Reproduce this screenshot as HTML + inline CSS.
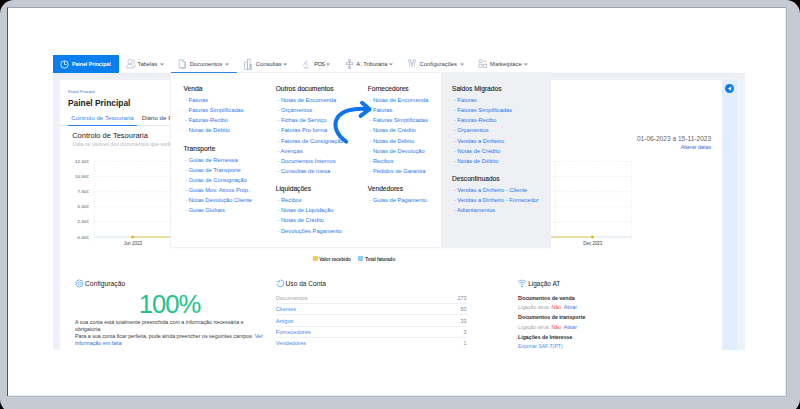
<!DOCTYPE html>
<html><head><meta charset="utf-8">
<style>
*{box-sizing:border-box;margin:0;padding:0}
html,body{width:800px;height:409px;overflow:hidden;background:#000;font-family:"Liberation Sans",sans-serif}
.a{position:absolute;white-space:nowrap}
#frame{position:absolute;left:0;top:0;width:800px;height:413px;background:#c6cbd3;border-radius:14px}
#screen{position:absolute;left:7px;top:7px;width:779px;height:389px;background:#fff;overflow:hidden;
 border-left:1px solid #41557a;border-top:1px solid #98a2b0;box-shadow:1px 1px 0 #b3b9c3, inset 0 -1px 0 #e6e9ed, inset -1px 0 0 #e6e9ed}
#s{position:absolute;left:-8px;top:-8px;width:800px;height:409px}
.nav{font-size:5.8px;color:#3a3f4a;line-height:10px;top:58.8px}
.h{font-size:6.65px;color:#1e1e28;line-height:10px;-webkit-text-stroke:0.12px #1e1e28}
.l{font-size:5.75px;color:#2a76ee;line-height:10px}
.l:before{content:"- ";color:#8a93a3}
</style></head><body>
<div id="frame"></div>
<div id="screen"><div id="s">

<!-- page background -->
<div class="a" style="left:53px;top:73px;width:692px;height:277px;background:#f0f1f6"></div>
<div class="a" style="left:53px;top:73px;width:692px;height:2.5px;background:#ebedf3"></div>
<div class="a" style="left:60px;top:80px;width:662px;height:270px;background:#fff"></div>
<div class="a" style="left:722px;top:80px;width:15px;height:270px;background:#e1effd"></div>
<div class="a" style="left:725px;top:83.5px;width:9px;height:9px;border-radius:50%;background:#0f7bf0"></div>
<svg class="a" style="left:725px;top:83.5px" width="9" height="9" viewBox="0 0 9 9"><path d="M3.1,4.5 L6,2.7 L6,6.3 Z" fill="#fff" stroke="#fff" stroke-width="0.3" stroke-linejoin="round"/></svg>

<!-- nav -->
<div class="a" style="left:53px;top:55px;width:65.5px;height:18px;background:#0c7fef"></div>
<svg class="a" style="left:60px;top:59.5px" width="9" height="9" viewBox="0 0 9 9"><circle cx="4.5" cy="4.5" r="3.7" fill="none" stroke="#fff" stroke-width="0.8"/><path d="M4.5,1.5 V4.5 H6.5" fill="none" stroke="#fff" stroke-width="0.8"/></svg>
<div class="a" style="left:72px;top:59px;font-size:5.2px;font-weight:bold;color:#fff;line-height:10px">Painel Principal</div>

<svg class="a" style="left:124.50px;top:58.20px" width="12" height="11" viewBox="0 0 12 11" fill="none" stroke="#a3aec3" stroke-width="0.65"><circle cx="5" cy="3.6" r="2.2"/><path d="M1.3,10 C1.3,7.3 3,6.3 5,6.3 C7,6.3 8.7,7.3 8.7,10 Z"/><path d="M7.2,1.6 C8.8,1.6 9.6,2.6 9.6,3.7 C9.6,4.8 8.9,5.6 7.8,5.8 M9.3,6.6 C10.3,7.1 10.8,8.1 10.8,9.6"/></svg>
<div class="a nav" style="left:137.50px">Tabelas</div>
<svg class="a" style="left:177.7px;top:58.6px" width="9" height="10" viewBox="0 0 9 10" fill="none" stroke="#a3aec3" stroke-width="0.65"><path d="M1.2,0.8 H4.6 L6.6,2.8 V8.6 H1.2 Z M4.6,0.8 V2.8 H6.6"/><path d="M7.6,2.6 V9.4 H2.4"/></svg>
<div class="a nav" style="left:189.70px">Documentos</div>
<svg class="a" style="left:244px;top:58.5px" width="8" height="11" viewBox="0 0 8 11" fill="none" stroke="#a3aec3" stroke-width="0.65"><rect x="0.7" y="3" width="2.6" height="7.3"/><rect x="3.3" y="0.5" width="2.8" height="9.8"/><rect x="6.1" y="5.6" width="1.4" height="4.7"/></svg>
<div class="a nav" style="left:255.80px">Consultas</div>
<svg class="a" style="left:302px;top:59px" width="8" height="10" viewBox="0 0 8 10" fill="none" stroke="#a3aec3" stroke-width="0.65"><path d="M5.6,0.8 L1,6.6 M3.6,3.6 L5.6,7.2 M2,8.8 H6.8"/></svg>
<div class="a nav" style="left:314.30px;letter-spacing:-0.7px">POS</div>
<svg class="a" style="left:344.5px;top:58.5px" width="9" height="11" viewBox="0 0 9 11" fill="none" stroke="#a3aec3" stroke-width="0.65"><rect x="3.6" y="0.7" width="1.8" height="1.3"/><path d="M4.5,2 V9.5"/><rect x="1.2" y="3.3" width="6.6" height="2.4"/><path d="M3.2,7.6 H5.8 V9.4 H3.2 Z"/></svg>
<div class="a nav" style="left:356.30px">A. Tributária</div>
<svg class="a" style="left:408.2px;top:59.2px" width="8" height="10" viewBox="0 0 8 10" fill="none" stroke="#aab5c9" stroke-width="0.6"><path d="M1.6,3.4 V8.6 M4,0.8 V4.2 M4,6.2 V8.6 M6.4,3.4 V8.6"/><rect x="0.8" y="0.9" width="1.6" height="2.4"/><rect x="3.2" y="4.3" width="1.6" height="1.8"/><rect x="5.6" y="0.9" width="1.6" height="2.4"/></svg>
<div class="a nav" style="left:419.60px">Configurações</div>
<svg class="a" style="left:477.5px;top:59px" width="10" height="10" viewBox="0 0 10 10" fill="none" stroke="#a3aec3" stroke-width="0.65"><rect x="1" y="1" width="3" height="2.6"/><path d="M5.6,2.3 H8.8"/><rect x="1" y="5.2" width="3" height="3.2"/><rect x="5.6" y="5.2" width="3.2" height="3.2"/></svg>
<div class="a nav" style="left:490.10px">Marketplace</div>
<svg class="a" style="left:160.00px;top:62.80px" width="4" height="3" viewBox="0 0 4 3"><path d="M0.5,0.7 L2,2.2 L3.5,0.7 Z" fill="#8a909a" stroke="#8a909a" stroke-width="0.5" stroke-linejoin="round"/></svg>
<svg class="a" style="left:225.20px;top:62.80px" width="4" height="3" viewBox="0 0 4 3"><path d="M0.5,0.7 L2,2.2 L3.5,0.7 Z" fill="#8a909a" stroke="#8a909a" stroke-width="0.5" stroke-linejoin="round"/></svg>
<svg class="a" style="left:283.40px;top:62.80px" width="4" height="3" viewBox="0 0 4 3"><path d="M0.5,0.7 L2,2.2 L3.5,0.7 Z" fill="#8a909a" stroke="#8a909a" stroke-width="0.5" stroke-linejoin="round"/></svg>
<svg class="a" style="left:326.00px;top:62.80px" width="4" height="3" viewBox="0 0 4 3"><path d="M0.5,0.7 L2,2.2 L3.5,0.7 Z" fill="#8a909a" stroke="#8a909a" stroke-width="0.5" stroke-linejoin="round"/></svg>
<svg class="a" style="left:389.20px;top:62.80px" width="4" height="3" viewBox="0 0 4 3"><path d="M0.5,0.7 L2,2.2 L3.5,0.7 Z" fill="#8a909a" stroke="#8a909a" stroke-width="0.5" stroke-linejoin="round"/></svg>
<svg class="a" style="left:459.50px;top:62.80px" width="4" height="3" viewBox="0 0 4 3"><path d="M0.5,0.7 L2,2.2 L3.5,0.7 Z" fill="#8a909a" stroke="#8a909a" stroke-width="0.5" stroke-linejoin="round"/></svg>
<svg class="a" style="left:524.00px;top:62.80px" width="4" height="3" viewBox="0 0 4 3"><path d="M0.5,0.7 L2,2.2 L3.5,0.7 Z" fill="#8a909a" stroke="#8a909a" stroke-width="0.5" stroke-linejoin="round"/></svg>
<div class="a" style="left:171px;top:71.8px;width:65.5px;height:1.3px;background:#2f86ee;z-index:5"></div>

<!-- card content -->
<div class="a" style="left:68px;top:88.6px;font-size:3.9px;color:#2f6fd6;line-height:6px">Painel Principal</div>
<div class="a" style="left:68.00px;top:97.00px;font-size:8.4px;font-weight:bold;color:#222;line-height:12px">Painel Principal</div>
<div class="a" style="left:71.30px;top:113.20px;font-size:6.2px;color:#3a84f2;line-height:10px">Controlo de Tesouraria</div>
<div class="a" style="left:141.70px;top:113.20px;font-size:6.2px;color:#444;line-height:10px">Diário de Fornecedores</div>
<div class="a" style="left:60px;top:125.0px;width:490px;height:0.7px;background:#e4e7ec"></div>
<div class="a" style="left:67.5px;top:124.6px;width:69.2px;height:1.4px;background:#2f86ee"></div>
<div class="a" style="left:72.20px;top:130.20px;font-size:7.5px;color:#222;line-height:11px">Controlo de Tesouraria</div>
<div class="a" style="left:72.4px;top:140.8px;font-size:5.25px;color:#b3b8c0;line-height:7px">Lista os valores dos documentos que estão pendentes de pagamento</div>

<div class="a" style="left:59.0px;top:157.80px;width:30px;text-align:right;font-size:4.2px;letter-spacing:0.2px;line-height:8px;color:#3d3d3d">12,50€</div>
<div class="a" style="left:59.0px;top:172.90px;width:30px;text-align:right;font-size:4.2px;letter-spacing:0.2px;line-height:8px;color:#3d3d3d">10,00€</div>
<div class="a" style="left:59.0px;top:188.10px;width:30px;text-align:right;font-size:4.2px;letter-spacing:0.2px;line-height:8px;color:#3d3d3d">7,50€</div>
<div class="a" style="left:59.0px;top:203.20px;width:30px;text-align:right;font-size:4.2px;letter-spacing:0.2px;line-height:8px;color:#3d3d3d">5,00€</div>
<div class="a" style="left:59.0px;top:218.40px;width:30px;text-align:right;font-size:4.2px;letter-spacing:0.2px;line-height:8px;color:#3d3d3d">2,50€</div>
<div class="a" style="left:59.0px;top:233.50px;width:30px;text-align:right;font-size:4.2px;letter-spacing:0.2px;line-height:8px;color:#3d3d3d">0,00€</div>
<svg class="a" style="left:0;top:0" width="800" height="409" viewBox="0 0 800 409"><line x1="94.3" y1="161.40" x2="631.6" y2="161.40" stroke="#e6e6e6" stroke-width="0.7" stroke-dasharray="1.5 1.5"/><line x1="94.3" y1="176.54" x2="631.6" y2="176.54" stroke="#e6e6e6" stroke-width="0.7" stroke-dasharray="1.5 1.5"/><line x1="94.3" y1="191.68" x2="631.6" y2="191.68" stroke="#e6e6e6" stroke-width="0.7" stroke-dasharray="1.5 1.5"/><line x1="94.3" y1="206.82" x2="631.6" y2="206.82" stroke="#e6e6e6" stroke-width="0.7" stroke-dasharray="1.5 1.5"/><line x1="94.3" y1="221.96" x2="631.6" y2="221.96" stroke="#e6e6e6" stroke-width="0.7" stroke-dasharray="1.5 1.5"/><line x1="94.30" y1="161.4" x2="94.30" y2="240.6" stroke="#e6e6e6" stroke-width="0.7" stroke-dasharray="1.5 1.5"/><line x1="171.06" y1="161.4" x2="171.06" y2="240.6" stroke="#e6e6e6" stroke-width="0.7" stroke-dasharray="1.5 1.5"/><line x1="247.81" y1="161.4" x2="247.81" y2="240.6" stroke="#e6e6e6" stroke-width="0.7" stroke-dasharray="1.5 1.5"/><line x1="324.57" y1="161.4" x2="324.57" y2="240.6" stroke="#e6e6e6" stroke-width="0.7" stroke-dasharray="1.5 1.5"/><line x1="401.33" y1="161.4" x2="401.33" y2="240.6" stroke="#e6e6e6" stroke-width="0.7" stroke-dasharray="1.5 1.5"/><line x1="478.09" y1="161.4" x2="478.09" y2="240.6" stroke="#e6e6e6" stroke-width="0.7" stroke-dasharray="1.5 1.5"/><line x1="554.84" y1="161.4" x2="554.84" y2="240.6" stroke="#e6e6e6" stroke-width="0.7" stroke-dasharray="1.5 1.5"/><line x1="631.60" y1="161.4" x2="631.60" y2="240.6" stroke="#e6e6e6" stroke-width="0.7" stroke-dasharray="1.5 1.5"/><rect x="94.3" y="236.2" width="537.3" height="1.8" fill="#e9eff7"/><rect x="132.5" y="236.45" width="460" height="1.3" fill="#efd27c"/><circle cx="132.5" cy="237.1" r="1.4" fill="#e2a70c"/><circle cx="592.4" cy="237.1" r="1.4" fill="#e2a70c"/></svg>
<div class="a" style="left:112.80px;top:239.90px;width:40px;text-align:center;font-size:4.45px;line-height:8px;color:#444">Jun 2023</div>
<div class="a" style="left:572.80px;top:239.90px;width:40px;text-align:center;font-size:4.45px;line-height:8px;color:#444">Dec 2023</div>
<div class="a" style="left:611.2px;top:134px;width:100px;text-align:right;font-size:6.6px;line-height:10px;color:#666">01-06-2023 a 15-11-2023</div>
<div class="a" style="left:611.2px;top:142.8px;width:100px;text-align:right;font-size:5.4px;line-height:8px;color:#2f6fd6">Alterar datas</div>
<div class="a" style="left:313.2px;top:256.2px;width:4.8px;height:4.5px;background:#f5cb5c"></div>
<div class="a" style="left:319.2px;top:255.6px;font-size:4.6px;line-height:8px;color:#333;font-weight:bold">Valor recebido</div>
<div class="a" style="left:358.2px;top:256.2px;width:4.8px;height:4.5px;background:#8ecdf7"></div>
<div class="a" style="left:365.2px;top:255.6px;font-size:4.55px;line-height:8px;color:#333;font-weight:bold">Total faturado</div>
<!--bottom-->
<svg class="a" style="left:75.20px;top:279.40px" width="9" height="9" viewBox="0 0 9 9" fill="none" stroke="#4d9af5" stroke-width="0.7"><circle cx="4.5" cy="4.5" r="1.5"/><path d="M4.5,0.6 L5.4,1.6 L6.8,1.3 L7,2.7 L8.2,3.5 L7.6,4.5 L8.2,5.5 L7,6.3 L6.8,7.7 L5.4,7.4 L4.5,8.4 L3.6,7.4 L2.2,7.7 L2,6.3 L0.8,5.5 L1.4,4.5 L0.8,3.5 L2,2.7 L2.2,1.3 L3.6,1.6 Z"/></svg>
<div class="a" style="left:85.00px;top:278.90px;font-size:6.75px;line-height:10px;color:#222">Configuração</div>
<div class="a" style="left:138.7px;top:289.2px;font-size:25.6px;letter-spacing:-1px;line-height:30px;color:#1ec28b">100%</div>
<div class="a" style="left:75.00px;top:319.35px;font-size:5.32px;line-height:6.95px;color:#3a3a3a;white-space:normal;width:190px">A sua conta está totalmente preenchida com a informação necessária e obrigatória.<br>Para a sua conta ficar perfeita, pode ainda preencher os seguintes campos: <span style="color:#2f6fd6">Ver informação em falta</span></div>
<svg class="a" style="left:276px;top:278.6px" width="9" height="9" viewBox="0 0 9 9" fill="none" stroke="#5aa2f6" stroke-width="0.8" stroke-linejoin="round"><path d="M4.5,0.95 A3.5,3.5 0 1 1 0.9,4.9"/><path d="M0.5,2.9 L3.7,2.9 L3.7,0.9"/></svg>
<div class="a" style="left:285.60px;top:278.80px;font-size:6.6px;line-height:10px;color:#222">Uso da Conta</div>
<div class="a" style="left:275.8px;top:294px;font-size:5.65px;line-height:8px;color:#a3a3a3">Documentos</div>
<div class="a" style="left:416.6px;top:294px;width:50px;text-align:right;font-size:5.4px;line-height:8px;color:#8a8a8a">273</div>
<div class="a" style="left:277.00px;top:303.10px;width:190px;height:0.7px;background:#eff0f3"></div>
<div class="a" style="left:275.8px;top:305px;font-size:5.65px;line-height:8px;color:#4a8cf0">Clientes</div>
<div class="a" style="left:416.6px;top:305px;width:50px;text-align:right;font-size:5.4px;line-height:8px;color:#8a8a8a">50</div>
<div class="a" style="left:277.00px;top:314.40px;width:190px;height:0.7px;background:#eff0f3"></div>
<div class="a" style="left:275.8px;top:317px;font-size:5.65px;line-height:8px;color:#4a8cf0">Artigos</div>
<div class="a" style="left:416.6px;top:317px;width:50px;text-align:right;font-size:5.4px;line-height:8px;color:#8a8a8a">33</div>
<div class="a" style="left:277.00px;top:325.70px;width:190px;height:0.7px;background:#eff0f3"></div>
<div class="a" style="left:275.8px;top:328px;font-size:5.65px;line-height:8px;color:#4a8cf0">Fornecedores</div>
<div class="a" style="left:416.6px;top:328px;width:50px;text-align:right;font-size:5.4px;line-height:8px;color:#8a8a8a">3</div>
<div class="a" style="left:277.00px;top:337.00px;width:190px;height:0.7px;background:#eff0f3"></div>
<div class="a" style="left:275.8px;top:339px;font-size:5.65px;line-height:8px;color:#4a8cf0">Vendedores</div>
<div class="a" style="left:416.6px;top:339px;width:50px;text-align:right;font-size:5.4px;line-height:8px;color:#8a8a8a">1</div>
<svg class="a" style="left:517.3px;top:278.7px" width="10" height="9" viewBox="0 0 10 9" fill="none" stroke="#4d9af5" stroke-width="0.7"><path d="M0.8,3 C3.3,0.6 6.7,0.6 9.2,3 M2.2,4.5 C3.9,2.9 6.1,2.9 7.8,4.5 M3.6,6 C4.4,5.3 5.6,5.3 6.4,6"/><circle cx="5" cy="7.6" r="0.5" fill="#4d9af5"/></svg>
<div class="a" style="left:528.20px;top:279.10px;font-size:6.5px;line-height:10px;color:#222">Ligação AT</div>
<div class="a" style="left:518.10px;top:294px;font-size:5.3px;line-height:8px;color:#2a2a2a;font-weight:bold">Documentos de venda</div>
<div class="a" style="left:518.10px;top:303.20px;font-size:5.2px;line-height:8px;color:#aaa">Ligação ativa: <span style="color:#f0483e">Não</span>&nbsp; <span style="color:#3b6fd8">Ativar</span></div>
<div class="a" style="left:518.10px;top:313.10px;font-size:5.3px;line-height:8px;color:#2a2a2a;font-weight:bold">Documentos de transporte</div>
<div class="a" style="left:518.10px;top:323px;font-size:5.2px;line-height:8px;color:#aaa">Ligação ativa: <span style="color:#f0483e">Não</span>&nbsp; <span style="color:#3b6fd8">Ativar</span></div>
<div class="a" style="left:518.10px;top:333px;font-size:5.2px;line-height:8px;color:#2a2a2a;font-weight:bold">Ligações de Interesse</div>
<div class="a" style="left:518.10px;top:341.90px;font-size:5.0px;line-height:8px;color:#4d8ef0">Exportar SAF-T(PT)</div>
<!-- dropdown -->
<div class="a" style="left:171px;top:73px;width:378.5px;height:174px;background:#fff;box-shadow:0 0 0 1px #eff1f6, 0 1px 2px rgba(60,70,100,.07)"></div>
<div class="a" style="left:440.5px;top:73px;width:109px;height:174px;background:#eef0f4"></div>
<div class="a h" style="left:183.50px;top:84px">Venda</div>
<div class="a l" style="left:185.20px;top:95px">Faturas</div>
<div class="a l" style="left:185.20px;top:105px">Faturas Simplificadas</div>
<div class="a l" style="left:185.20px;top:115px">Faturas-Recibo</div>
<div class="a l" style="left:185.20px;top:125px">Notas de Débito</div>
<div class="a h" style="left:183.50px;top:144px">Transporte</div>
<div class="a l" style="left:185.20px;top:155px">Guias de Remessa</div>
<div class="a l" style="left:185.20px;top:165px">Guias de Transporte</div>
<div class="a l" style="left:185.20px;top:175px">Guias de Consignação</div>
<div class="a l" style="left:185.20px;top:185px">Guias Mov. Ativos Próp.</div>
<div class="a l" style="left:185.20px;top:195px">Notas Devolução Cliente</div>
<div class="a l" style="left:185.20px;top:205px">Guias Globais</div>
<div class="a h" style="left:275.70px;top:84px">Outros documentos</div>
<div class="a l" style="left:277.40px;top:95px">Notas de Encomenda</div>
<div class="a l" style="left:277.40px;top:105px">Orçamentos</div>
<div class="a l" style="left:277.40px;top:115px">Fichas de Serviço</div>
<div class="a l" style="left:277.40px;top:125px">Faturas Pro forma</div>
<div class="a l" style="left:277.40px;top:136px">Faturas de Consignação</div>
<div class="a l" style="left:277.40px;top:146px">Avenças</div>
<div class="a l" style="left:277.40px;top:156px">Documentos Internos</div>
<div class="a l" style="left:277.40px;top:166px">Consultas de mesa</div>
<div class="a h" style="left:275.70px;top:184px">Liquidações</div>
<div class="a l" style="left:277.40px;top:195px">Recibos</div>
<div class="a l" style="left:277.40px;top:205px">Notas de Liquidação</div>
<div class="a l" style="left:277.40px;top:215px">Notas de Crédito</div>
<div class="a l" style="left:277.40px;top:226px">Devoluções Pagamento</div>
<div class="a h" style="left:367.70px;top:84px">Fornecedores</div>
<div class="a l" style="left:369.40px;top:95px">Notas de Encomenda</div>
<div class="a l" style="left:369.40px;top:105px">Faturas</div>
<div class="a l" style="left:369.40px;top:115px">Faturas Simplificadas</div>
<div class="a l" style="left:369.40px;top:125px">Notas de Crédito</div>
<div class="a l" style="left:369.40px;top:136px">Notas de Débito</div>
<div class="a l" style="left:369.40px;top:146px">Notas de Devolução</div>
<div class="a l" style="left:369.40px;top:156px">Recibos</div>
<div class="a l" style="left:369.40px;top:166px">Pedidos de Garantia</div>
<div class="a h" style="left:367.70px;top:184px">Vendedores</div>
<div class="a l" style="left:369.40px;top:195px">Guias de Pagamento</div>
<div class="a h" style="left:452.00px;top:84px">Saldos Migrados</div>
<div class="a l" style="left:453.70px;top:95px">Faturas</div>
<div class="a l" style="left:453.70px;top:105px">Faturas Simplificadas</div>
<div class="a l" style="left:453.70px;top:115px">Faturas-Recibo</div>
<div class="a l" style="left:453.70px;top:125px">Orçamentos</div>
<div class="a l" style="left:453.70px;top:136px">Vendas a Dinheiro</div>
<div class="a l" style="left:453.70px;top:146px">Notas de Crédito</div>
<div class="a l" style="left:453.70px;top:156px">Notas de Débito</div>
<div class="a h" style="left:452.00px;top:174px">Descontinuados</div>
<div class="a l" style="left:453.70px;top:185px">Vendas a Dinheiro - Cliente</div>
<div class="a l" style="left:453.70px;top:195px">Vendas a Dinheiro - Fornecedor</div>
<div class="a l" style="left:453.70px;top:205px">Adiantamentos</div>

<svg class="a" style="left:0;top:0" width="800" height="409" viewBox="0 0 800 409"><path d="M346.2,141.6 C337,135.5 333,126 337,118.5 C341,111 353,107.6 369,109.2" fill="none" stroke="#0b74ee" stroke-width="4" stroke-linecap="round"/><path d="M362,102.8 L369.6,109.2 L360.6,115.8" fill="none" stroke="#0b74ee" stroke-width="4" stroke-linecap="round" stroke-linejoin="round"/></svg>
</div></div>
</body></html>
